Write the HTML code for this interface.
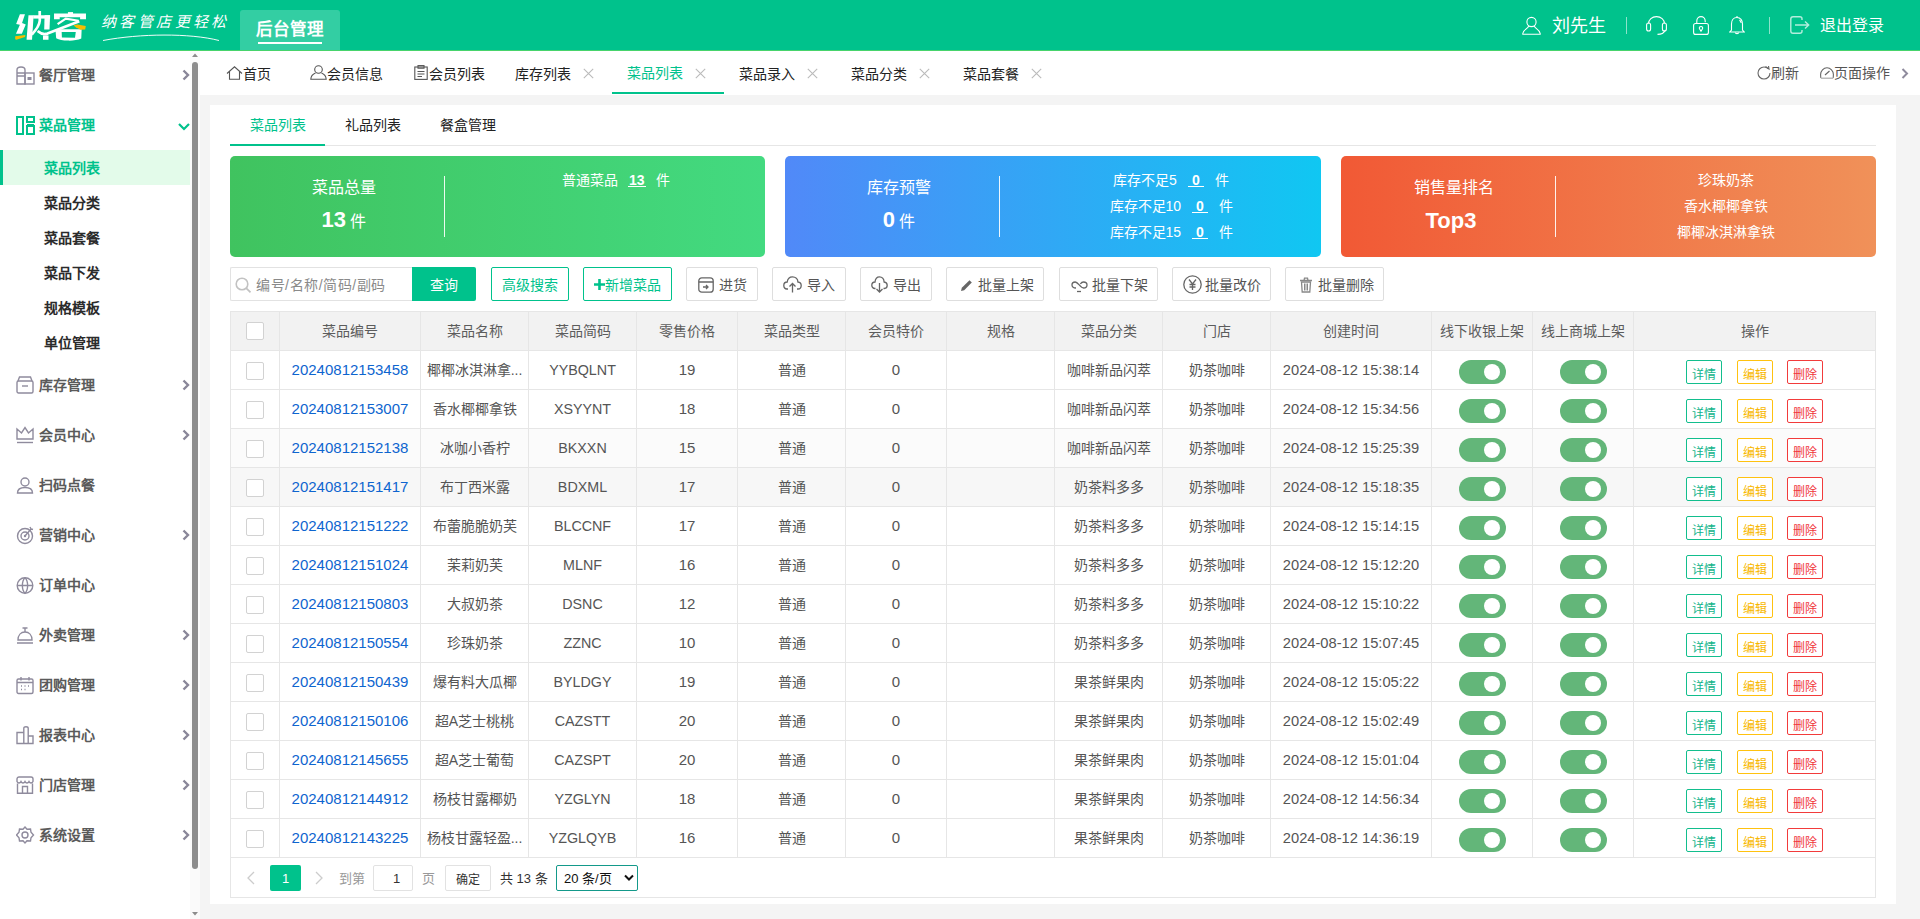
<!DOCTYPE html>
<html lang="zh-CN"><head><meta charset="utf-8"><title>纳客后台管理</title>
<style>
html,body{margin:0;padding:0;}
body{width:1920px;height:919px;overflow:hidden;position:relative;background:#f4f4f4;font-family:"Liberation Sans",sans-serif;}
.t{position:absolute;white-space:nowrap;}
</style></head><body>
<div class="t" style="left:0px;top:0px;width:1920px;height:50px;background:#00c28c;"></div><div class="t" style="left:0px;top:50px;width:1920px;height:1px;background:#48d46c;"></div><svg class="t" style="left:0px;top:0px;" width="100" height="50" viewBox="0 0 100 50" fill="none">
<g fill="#fff">
<path d="M19.88 14.27 L24.98 14.27 L22.04 23.1 L25.76 24.47 L21.84 33.69 L15.96 33.69 L19.88 24.86 L16.16 23.88 Z"/>
<path d="M28.5 15.25 L33.6 15.25 L32.04 39.76 L26.55 39.76 Z"/>
<path d="M33.2 15.25 L50.08 15.25 L50.08 18.6 L33.2 18.6 Z"/>
<path d="M44.6 15.25 L50.08 15.25 L49.5 29.6 L44.2 29.6 Z"/>
<rect x="43" y="35.45" width="5.5" height="4.3"/>
<path d="M67.94 12.1 L73.04 12.1 L73.04 14.5 L67.94 14.5 Z"/>
<path d="M54.03 13.49 L85.97 13.49 L85.97 19.36 L80.09 19.36 L80.09 17.21 L59.71 17.21 L59.71 19.36 L54.03 19.36 Z"/>
<path d="M55.4 29.16 L81.66 29.16 L81.27 38.56 C 78 40.2, 72 40.8, 67.94 40.6 C 63 40.5, 59 39.8, 56.19 38.17 Z M61.67 31.9 L61.9 37.39 L75 37.78 L75.78 31.9 Z" fill-rule="evenodd"/>
</g>
<g stroke="#fff" fill="none" stroke-linecap="butt">
<path d="M39.7 11 L39.8 20.5 C 39.5 25, 37 29, 31.8 34.5" stroke-width="2.7"/>
<path d="M37.6 31 C 40.5 33.6, 44 34.7, 47.5 33.6 L 79.3 21.2" stroke-width="2.7"/>
<path d="M57.6 24.2 L 65.8 18.6 L 78.6 20.8" stroke-width="2.1"/>
</g>
<g fill="#f7bd00">
<path d="M15.18 36.24 L25.37 35.06 L24.98 37.02 L16.35 39.76 L15.18 39.37 Z"/>
<path d="M73.43 25.24 L77.35 24.46 L85.77 26.03 L85.18 29.55 L80.48 29.75 L75.78 27.2 Z"/>
</g>
</svg><div class="t" style="left:101.0px;top:10.5px;font-size:15px;line-height:21px;color:#fff;font-weight:normal;letter-spacing:3.4px;font-style:italic;font-weight:300;">纳客管店更轻松</div><svg class="t" style="left:100px;top:33px;" width="130" height="10" viewBox="0 0 130 10" fill="none"><path d="M3 7.5 C 40 0.5, 90 0, 119 7.5" stroke="#fff" stroke-width="1" opacity="0.95"/></svg><div class="t" style="left:240px;top:10px;width:100px;height:40px;background:#33cea3;border-radius:3px 3px 0 0;"></div><div class="t" style="left:240.0px;top:17.8px;width:100px;text-align:center;font-size:16.5px;line-height:22.5px;color:#fff;font-weight:bold;">后台管理</div><div class="t" style="left:258px;top:42px;width:64px;height:2px;background:#fff;"></div><svg class="t" style="left:1522px;top:16px;" width="19" height="19" viewBox="0 0 19 19" fill="none"><circle cx="9.5" cy="6" r="4.6" stroke="#fff" stroke-width="1.1" fill="none"/><path d="M6.6 10 C 6.6 12.5, 1 13.5, 0.8 17.5 L 0.8 18.3 L 18.2 18.3 L 18.2 17.5 C 18 13.5, 12.4 12.5, 12.4 10" stroke="#fff" stroke-width="1.1" fill="none"/></svg><div class="t" style="left:1552.0px;top:13.5px;font-size:18px;line-height:24px;color:#fff;font-weight:normal;">刘先生</div><div class="t" style="left:1626px;top:17px;width:1px;height:17px;background:rgba(255,255,255,.55);"></div><svg class="t" style="left:1646px;top:16px;" width="21" height="19" viewBox="0 0 21 19" fill="none"><path d="M2.6 7.5 C 2.6 3.5, 6 0.6, 10.5 0.6 C 15 0.6, 18.4 3.5, 18.4 7.5" stroke="#fff" stroke-width="1.1" fill="none"/><rect x="0.6" y="7" width="4" height="8" rx="2" stroke="#fff" stroke-width="1.1" fill="none"/><rect x="16.4" y="7" width="4" height="8" rx="2" stroke="#fff" stroke-width="1.1" fill="none"/><path d="M19 14.5 C 18 17, 15 18.4, 11.5 18.4" stroke="#fff" stroke-width="1.1" fill="none"/></svg><svg class="t" style="left:1693px;top:16px;" width="16" height="19" viewBox="0 0 16 19" fill="none"><path d="M3.8 7.5 L3.8 5 C 3.8 2.6, 5.6 0.6, 8 0.6 C 10.4 0.6, 12.2 2.6, 12.2 5 L 12.2 6.2" stroke="#fff" stroke-width="1.1" fill="none"/><rect x="0.6" y="7.5" width="14.8" height="10.9" rx="2" stroke="#fff" stroke-width="1.1" fill="none"/><path d="M8 15.2 L6.5 12.8 C 6 12, 6.5 10.5, 8 10.5 C 9.5 10.5, 10 12, 9.5 12.8 Z" stroke="#fff" stroke-width="1.1" fill="none"/></svg><svg class="t" style="left:1729px;top:15px;" width="16" height="20" viewBox="0 0 16 20" fill="none"><path d="M8 1 L8 2.5" stroke="#fff" stroke-width="1.1" fill="none"/><path d="M8 2.5 C 4.5 2.5, 2.5 5.5, 2.5 9 L 2.5 15 L 0.8 17 L 15.2 17 L 13.5 15 L 13.5 9 C 13.5 5.5, 11.5 2.5, 8 2.5 Z" stroke="#fff" stroke-width="1.1" fill="none"/><path d="M6.2 17.5 C 6.5 19, 9.5 19, 9.8 17.5" stroke="#fff" stroke-width="1.1" fill="none"/><path d="M10.5 5 C 11.5 5.8, 12 7, 12.2 8" stroke="#fff" stroke-width="1.1" fill="none"/></svg><div class="t" style="left:1769px;top:17px;width:1px;height:17px;background:rgba(255,255,255,.55);"></div><svg class="t" style="left:1790px;top:16px;" width="20" height="18" viewBox="0 0 20 18" fill="none"><path d="M12 4 L12 2.8 C 12 1.6, 11 0.8, 9.8 0.8 L 3 0.8 C 1.8 0.8, 0.8 1.8, 0.8 3 L 0.8 15 C 0.8 16.2, 1.8 17.2, 3 17.2 L 9.8 17.2 C 11 17.2, 12 16.4, 12 15.2 L 12 14" stroke="rgba(255,255,255,.7)" stroke-width="1.4" fill="none"/><path d="M5 9 L18.5 9 M15 5.5 L18.7 9 L15 12.5" stroke="rgba(255,255,255,.7)" stroke-width="1.4" fill="none"/></svg><div class="t" style="left:1820.0px;top:15.0px;font-size:16px;line-height:22px;color:#fff;font-weight:normal;">退出登录</div><div class="t" style="left:0px;top:51px;width:190px;height:868px;background:#fff;"></div><div class="t" style="left:190px;top:51px;width:10px;height:868px;background:#fafafa;"></div><div class="t" style="left:192px;top:62px;width:6px;height:807px;background:#8c8c8c;border-radius:3px;"></div><svg class="t" style="left:192px;top:53px;" width="6" height="4" viewBox="0 0 6 4" fill="none"><path d="M0 4 L3 0.5 L6 4 Z" fill="#8c8c8c"/></svg><svg class="t" style="left:192px;top:912px;" width="6" height="4" viewBox="0 0 6 4" fill="none"><path d="M0 0 L3 3.5 L6 0 Z" fill="#8c8c8c"/></svg><svg class="t" style="left:16px;top:66px;" width="19" height="19" viewBox="0 0 19 19" fill="none"><path d="M1 18 L1 4 C 1 2, 2.5 1, 5 1 C 7.5 1, 9 2, 9 4 L 9 18 Z" stroke="#8f8b9d" stroke-width="1.4" fill="none"/><path d="M1 7 L9 7 M1 10 L9 10" stroke="#8f8b9d" stroke-width="1.4" fill="none"/><rect x="9" y="7" width="9" height="11" stroke="#8f8b9d" stroke-width="1.4" fill="none"/><rect x="11.5" y="11" width="4" height="3" fill="#8f8b9d"/></svg><div class="t" style="left:39.0px;top:64.5px;font-size:14px;line-height:20px;color:#5a5a5a;font-weight:bold;">餐厅管理</div><svg class="t" style="left:182px;top:69px;" width="8" height="12" viewBox="0 0 8 12" fill="none"><path d="M1.5 1.5 L6 6 L1.5 10.5" stroke="#8a8799" stroke-width="2.4" fill="none"/></svg><svg class="t" style="left:16px;top:116px;" width="19" height="19" viewBox="0 0 19 19" fill="none"><rect x="1" y="1" width="6" height="17" stroke="#00c28c" stroke-width="2" fill="none"/><rect x="11" y="1" width="7" height="5" stroke="#00c28c" stroke-width="2" fill="none"/><rect x="11" y="10" width="7" height="8" stroke="#00c28c" stroke-width="2" fill="none"/><rect x="11" y="8" width="7" height="2" fill="#00c28c"/></svg><div class="t" style="left:39.0px;top:114.5px;font-size:14px;line-height:20px;color:#00c28c;font-weight:bold;">菜品管理</div><svg class="t" style="left:178px;top:123px;" width="12" height="8" viewBox="0 0 12 8" fill="none"><path d="M1 1 L6 6 L11 1" stroke="#00c28c" stroke-width="2.2" fill="none"/></svg><svg class="t" style="left:16px;top:376px;" width="19" height="19" viewBox="0 0 19 19" fill="none"><path d="M2 5 L3.5 1 L14.5 1 L16 5" stroke="#8f8b9d" stroke-width="1.4" fill="none"/><rect x="1" y="5" width="16" height="12" rx="1.5" stroke="#8f8b9d" stroke-width="1.4" fill="none"/><path d="M6 10 L12 10" stroke="#8f8b9d" stroke-width="1.4" fill="none"/></svg><div class="t" style="left:39.0px;top:374.5px;font-size:14px;line-height:20px;color:#5a5a5a;font-weight:bold;">库存管理</div><svg class="t" style="left:182px;top:379px;" width="8" height="12" viewBox="0 0 8 12" fill="none"><path d="M1.5 1.5 L6 6 L1.5 10.5" stroke="#8a8799" stroke-width="2.4" fill="none"/></svg><svg class="t" style="left:16px;top:426px;" width="19" height="19" viewBox="0 0 19 19" fill="none"><path d="M1 13 L1 3 L5.5 7 L9 1.5 L12.5 7 L17 3 L17 13 Z" stroke="#8f8b9d" stroke-width="1.4" fill="none"/><path d="M1 16.5 L17 16.5" stroke="#8f8b9d" stroke-width="1.4" fill="none"/></svg><div class="t" style="left:39.0px;top:424.5px;font-size:14px;line-height:20px;color:#5a5a5a;font-weight:bold;">会员中心</div><svg class="t" style="left:182px;top:429px;" width="8" height="12" viewBox="0 0 8 12" fill="none"><path d="M1.5 1.5 L6 6 L1.5 10.5" stroke="#8a8799" stroke-width="2.4" fill="none"/></svg><svg class="t" style="left:16px;top:476px;" width="19" height="19" viewBox="0 0 19 19" fill="none"><circle cx="9" cy="6" r="4" stroke="#8f8b9d" stroke-width="1.4" fill="none"/><path d="M1.5 17 C 1.5 13, 5 11.5, 9 11.5 C 13 11.5, 16.5 13, 16.5 17 Z" stroke="#8f8b9d" stroke-width="1.4" fill="none"/></svg><div class="t" style="left:39.0px;top:474.5px;font-size:14px;line-height:20px;color:#5a5a5a;font-weight:bold;">扫码点餐</div><svg class="t" style="left:16px;top:526px;" width="19" height="19" viewBox="0 0 19 19" fill="none"><circle cx="9" cy="10" r="7.5" stroke="#8f8b9d" stroke-width="1.4" fill="none"/><circle cx="9" cy="10" r="4" stroke="#8f8b9d" stroke-width="1.4" fill="none"/><circle cx="9" cy="10" r="1.2" fill="#8f8b9d"/><path d="M9 10 L15 3 M14 1 L15 3 L17 3.5" stroke="#8f8b9d" stroke-width="1.4" fill="none"/></svg><div class="t" style="left:39.0px;top:524.5px;font-size:14px;line-height:20px;color:#5a5a5a;font-weight:bold;">营销中心</div><svg class="t" style="left:182px;top:529px;" width="8" height="12" viewBox="0 0 8 12" fill="none"><path d="M1.5 1.5 L6 6 L1.5 10.5" stroke="#8a8799" stroke-width="2.4" fill="none"/></svg><svg class="t" style="left:16px;top:576px;" width="19" height="19" viewBox="0 0 19 19" fill="none"><circle cx="9" cy="9.5" r="7.8" stroke="#8f8b9d" stroke-width="1.4" fill="none"/><path d="M1.2 9.5 L16.8 9.5 M9 1.7 C 5.5 5, 5.5 14, 9 17.3 C 12.5 14, 12.5 5, 9 1.7" stroke="#8f8b9d" stroke-width="1.4" fill="none"/></svg><div class="t" style="left:39.0px;top:574.5px;font-size:14px;line-height:20px;color:#5a5a5a;font-weight:bold;">订单中心</div><svg class="t" style="left:16px;top:626px;" width="19" height="19" viewBox="0 0 19 19" fill="none"><path d="M2 14 C 2 9, 5 6, 9 6 C 13 6, 16 9, 16 14 Z" stroke="#8f8b9d" stroke-width="1.4" fill="none"/><path d="M1 17 L17 17 M6.5 2 L11.5 2 M9 2 L9 6" stroke="#8f8b9d" stroke-width="1.4" fill="none"/></svg><div class="t" style="left:39.0px;top:624.5px;font-size:14px;line-height:20px;color:#5a5a5a;font-weight:bold;">外卖管理</div><svg class="t" style="left:182px;top:629px;" width="8" height="12" viewBox="0 0 8 12" fill="none"><path d="M1.5 1.5 L6 6 L1.5 10.5" stroke="#8a8799" stroke-width="2.4" fill="none"/></svg><svg class="t" style="left:16px;top:676px;" width="19" height="19" viewBox="0 0 19 19" fill="none"><rect x="1" y="3" width="16" height="14.5" rx="1.5" stroke="#8f8b9d" stroke-width="1.4" fill="none"/><path d="M5 1 L5 4.5 M13 1 L13 4.5 M1 6.5 L17 6.5" stroke="#8f8b9d" stroke-width="1.4" fill="none"/><path d="M5 10 L6 10 M8.5 10 L9.5 10 M12 10 L13 10 M5 13.5 L6 13.5 M8.5 13.5 L9.5 13.5" stroke="#8f8b9d" stroke-width="1.4" fill="none"/></svg><div class="t" style="left:39.0px;top:674.5px;font-size:14px;line-height:20px;color:#5a5a5a;font-weight:bold;">团购管理</div><svg class="t" style="left:182px;top:679px;" width="8" height="12" viewBox="0 0 8 12" fill="none"><path d="M1.5 1.5 L6 6 L1.5 10.5" stroke="#8a8799" stroke-width="2.4" fill="none"/></svg><svg class="t" style="left:16px;top:726px;" width="19" height="19" viewBox="0 0 19 19" fill="none"><path d="M1 17.5 L1 6.5 L7.8 6.5 L7.8 17.5 Z M7.8 17.5 L7.8 2.2 C 7.8 1.2, 8.5 0.7, 10 0.7 C 11.5 0.7, 12.2 1.2, 12.2 2.2 L 12.2 17.5 Z M12.2 17.5 L12.2 10 L17 10 L17 17.5 Z" stroke="#8f8b9d" stroke-width="1.4" fill="none"/></svg><div class="t" style="left:39.0px;top:724.5px;font-size:14px;line-height:20px;color:#5a5a5a;font-weight:bold;">报表中心</div><svg class="t" style="left:182px;top:729px;" width="8" height="12" viewBox="0 0 8 12" fill="none"><path d="M1.5 1.5 L6 6 L1.5 10.5" stroke="#8a8799" stroke-width="2.4" fill="none"/></svg><svg class="t" style="left:16px;top:776px;" width="19" height="19" viewBox="0 0 19 19" fill="none"><path d="M1.5 7.5 L1.5 17.2 L16.5 17.2 L16.5 7.5" stroke="#8f8b9d" stroke-width="1.4" fill="none"/><path d="M1 5.5 L1 3 C 1 1.8, 2 1, 3 1 L 15 1 C 16 1, 17 1.8, 17 3 L 17 5.5 C 16 7.5, 14 7.5, 13 5.5 C 12 7.5, 10 7.5, 9 5.5 C 8 7.5, 6 7.5, 5 5.5 C 4 7.5, 2 7.5, 1 5.5 Z" stroke="#8f8b9d" stroke-width="1.4" fill="none"/><path d="M6.5 17.2 L6.5 10.5 L11.5 10.5 L11.5 17.2" stroke="#8f8b9d" stroke-width="1.4" fill="none"/></svg><div class="t" style="left:39.0px;top:774.5px;font-size:14px;line-height:20px;color:#5a5a5a;font-weight:bold;">门店管理</div><svg class="t" style="left:182px;top:779px;" width="8" height="12" viewBox="0 0 8 12" fill="none"><path d="M1.5 1.5 L6 6 L1.5 10.5" stroke="#8a8799" stroke-width="2.4" fill="none"/></svg><svg class="t" style="left:16px;top:826px;" width="19" height="19" viewBox="0 0 19 19" fill="none"><path d="M9 1 L11 3.2 L14.5 3 L15 6.3 L17.5 9 L15 11.7 L14.5 15 L11 14.8 L9 17 L7 14.8 L3.5 15 L3 11.7 L0.5 9 L3 6.3 L3.5 3 L7 3.2 Z" stroke="#8f8b9d" stroke-width="1.4" fill="none"/><circle cx="9" cy="9" r="3" stroke="#8f8b9d" stroke-width="1.4" fill="none"/></svg><div class="t" style="left:39.0px;top:824.5px;font-size:14px;line-height:20px;color:#5a5a5a;font-weight:bold;">系统设置</div><svg class="t" style="left:182px;top:829px;" width="8" height="12" viewBox="0 0 8 12" fill="none"><path d="M1.5 1.5 L6 6 L1.5 10.5" stroke="#8a8799" stroke-width="2.4" fill="none"/></svg><div class="t" style="left:0px;top:150px;width:190px;height:35px;background:#e3fbea;"></div><div class="t" style="left:0px;top:150px;width:3px;height:35px;background:#00c28c;"></div><div class="t" style="left:44.0px;top:158.0px;font-size:14px;line-height:20px;color:#00c28c;font-weight:bold;">菜品列表</div><div class="t" style="left:44.0px;top:193.0px;font-size:14px;line-height:20px;color:#2b2b2b;font-weight:bold;">菜品分类</div><div class="t" style="left:44.0px;top:228.0px;font-size:14px;line-height:20px;color:#2b2b2b;font-weight:bold;">菜品套餐</div><div class="t" style="left:44.0px;top:263.0px;font-size:14px;line-height:20px;color:#2b2b2b;font-weight:bold;">菜品下发</div><div class="t" style="left:44.0px;top:298.0px;font-size:14px;line-height:20px;color:#2b2b2b;font-weight:bold;">规格模板</div><div class="t" style="left:44.0px;top:333.0px;font-size:14px;line-height:20px;color:#2b2b2b;font-weight:bold;">单位管理</div><div class="t" style="left:200px;top:51px;width:1720px;height:44px;background:#fff;"></div><svg class="t" style="left:226px;top:66px;" width="17" height="14" viewBox="0 0 17 14" fill="none"><path d="M1 7.5 L8.5 0.8 L16 7.5 M3.5 5.5 L3.5 13.3 L13.5 13.3 L13.5 5.5" stroke="#555" stroke-width="1.1" fill="none"/></svg><div class="t" style="left:243.0px;top:64.0px;font-size:14px;line-height:20px;color:#222;font-weight:normal;">首页</div><svg class="t" style="left:310px;top:65px;" width="17" height="15" viewBox="0 0 17 15" fill="none"><circle cx="8.5" cy="4.5" r="3.8" stroke="#555" stroke-width="1.1" fill="none"/><path d="M5.5 8 C 3 9, 1 11, 0.8 14.2 L 16.2 14.2 C 16 11, 14 9, 11.5 8" stroke="#555" stroke-width="1.1" fill="none"/></svg><div class="t" style="left:327.0px;top:64.0px;font-size:14px;line-height:20px;color:#222;font-weight:normal;">会员信息</div><svg class="t" style="left:414px;top:65px;" width="14" height="15" viewBox="0 0 14 15" fill="none"><rect x="0.8" y="2" width="12.4" height="12.4" stroke="#555" stroke-width="1.1" fill="none"/><rect x="4" y="0.6" width="6" height="2.6" stroke="#555" stroke-width="1.1" fill="none"/><path d="M3.5 6.5 L10.5 6.5 M3.5 9 L10.5 9 M3.5 11.5 L8 11.5" stroke="#555" stroke-width="1.1" fill="none"/></svg><div class="t" style="left:429.0px;top:64.0px;font-size:14px;line-height:20px;color:#222;font-weight:normal;">会员列表</div><div class="t" style="left:515.0px;top:64.0px;font-size:14px;line-height:20px;color:#222;font-weight:normal;">库存列表</div><svg class="t" style="left:583px;top:68px;" width="11" height="11" viewBox="0 0 11 11" fill="none"><path d="M0.8 0.8 L10.2 10.2 M10.2 0.8 L0.8 10.2" stroke="#bbb" stroke-width="1.1" fill="none"/></svg><div class="t" style="left:627.0px;top:63.0px;font-size:14px;line-height:20px;color:#00c28c;font-weight:normal;">菜品列表</div><svg class="t" style="left:695px;top:68px;" width="11" height="11" viewBox="0 0 11 11" fill="none"><path d="M0.8 0.8 L10.2 10.2 M10.2 0.8 L0.8 10.2" stroke="#bbb" stroke-width="1.1" fill="none"/></svg><div class="t" style="left:739.0px;top:64.0px;font-size:14px;line-height:20px;color:#222;font-weight:normal;">菜品录入</div><svg class="t" style="left:807px;top:68px;" width="11" height="11" viewBox="0 0 11 11" fill="none"><path d="M0.8 0.8 L10.2 10.2 M10.2 0.8 L0.8 10.2" stroke="#bbb" stroke-width="1.1" fill="none"/></svg><div class="t" style="left:851.0px;top:64.0px;font-size:14px;line-height:20px;color:#222;font-weight:normal;">菜品分类</div><svg class="t" style="left:919px;top:68px;" width="11" height="11" viewBox="0 0 11 11" fill="none"><path d="M0.8 0.8 L10.2 10.2 M10.2 0.8 L0.8 10.2" stroke="#bbb" stroke-width="1.1" fill="none"/></svg><div class="t" style="left:963.0px;top:64.0px;font-size:14px;line-height:20px;color:#222;font-weight:normal;">菜品套餐</div><svg class="t" style="left:1031px;top:68px;" width="11" height="11" viewBox="0 0 11 11" fill="none"><path d="M0.8 0.8 L10.2 10.2 M10.2 0.8 L0.8 10.2" stroke="#bbb" stroke-width="1.1" fill="none"/></svg><div class="t" style="left:612px;top:92px;width:112px;height:2px;background:#00c28c;"></div><svg class="t" style="left:1757px;top:66px;" width="14" height="14" viewBox="0 0 14 14" fill="none"><path d="M11.5 3 C 10.3 1.7, 8.7 1, 7 1 C 3.7 1, 1 3.7, 1 7 C 1 10.3, 3.7 13, 7 13 C 10.3 13, 13 10.3, 13 7" stroke="#666" stroke-width="1.1" fill="none"/><path d="M8.5 0.5 L12 3 L11.5 0" stroke="#666" stroke-width="1.1" fill="none"/></svg><div class="t" style="left:1771.0px;top:62.8px;font-size:14px;line-height:20px;color:#555;font-weight:normal;">刷新</div><svg class="t" style="left:1820px;top:67px;" width="14" height="12" viewBox="0 0 14 12" fill="none"><path d="M1 11 C 0.6 10, 0.6 9, 0.6 7.5 C 0.6 3.8, 3.5 0.8, 7 0.8 C 10.5 0.8, 13.4 3.8, 13.4 7.5 C 13.4 9, 13.4 10, 13 11" stroke="#666" stroke-width="1.1" fill="none"/><path d="M5 8 L9.5 4" stroke="#666" stroke-width="1.1" fill="none"/><rect x="1" y="10.5" width="12" height="1.5" fill="#bbb"/></svg><div class="t" style="left:1834.0px;top:62.8px;font-size:14px;line-height:20px;color:#555;font-weight:normal;">页面操作</div><svg class="t" style="left:1901px;top:68px;" width="8" height="11" viewBox="0 0 8 11" fill="none"><path d="M1.5 1 L6 5.5 L1.5 10" stroke="#8f8b9d" stroke-width="2" fill="none"/></svg><div class="t" style="left:210px;top:105px;width:1686px;height:799px;background:#fff;"></div><div class="t" style="left:230px;top:145px;width:1646px;height:1px;background:#e6e6e6;"></div><div class="t" style="left:230px;top:144px;width:95px;height:2px;background:#00c28c;"></div><div class="t" style="left:249.5px;top:115.0px;font-size:14px;line-height:20px;color:#00c28c;font-weight:normal;">菜品列表</div><div class="t" style="left:344.5px;top:115.0px;font-size:14px;line-height:20px;color:#222;font-weight:normal;">礼品列表</div><div class="t" style="left:439.5px;top:115.0px;font-size:14px;line-height:20px;color:#222;font-weight:normal;">餐盒管理</div><div class="t" style="left:230px;top:156px;width:535px;height:101px;background:linear-gradient(to right,#40c35f,#43da80);border-radius:5px;"></div><div class="t" style="left:444px;top:176px;width:1px;height:61px;background:rgba(255,255,255,.9);"></div><div class="t" style="left:785px;top:156px;width:536px;height:101px;background:linear-gradient(to right,#5189f8,#10c7f2);border-radius:5px;"></div><div class="t" style="left:999px;top:176px;width:1px;height:61px;background:rgba(255,255,255,.9);"></div><div class="t" style="left:1341px;top:156px;width:535px;height:101px;background:linear-gradient(to right,#f15935,#f09159);border-radius:5px;"></div><div class="t" style="left:1555px;top:176px;width:1px;height:61px;background:rgba(255,255,255,.9);"></div><div class="t" style="left:244.0px;top:177.0px;width:200px;text-align:center;font-size:16px;line-height:22px;color:#fff;font-weight:normal;">菜品总量</div><div class="t" style="left:244.0px;top:205.0px;width:200px;text-align:center;font-size:16px;line-height:30px;color:#fff;font-weight:normal;"><b style="font-size:22px">13</b> <span>件</span></div><div class="t" style="left:562.0px;top:170.0px;font-size:14px;line-height:20px;color:#fff;font-weight:normal;">普通菜品</div><div class="t" style="left:629.0px;top:170.0px;font-size:14px;line-height:20px;color:#fff;font-weight:bold;">13</div><div class="t" style="left:628px;top:186px;width:18px;height:1px;background:#fff;"></div><div class="t" style="left:655.5px;top:170.0px;font-size:14px;line-height:20px;color:#fff;font-weight:normal;">件</div><div class="t" style="left:799.0px;top:177.0px;width:200px;text-align:center;font-size:16px;line-height:22px;color:#fff;font-weight:normal;">库存预警</div><div class="t" style="left:799.0px;top:205.0px;width:200px;text-align:center;font-size:16px;line-height:30px;color:#fff;font-weight:normal;"><b style="font-size:22px">0</b> <span>件</span></div><div class="t" style="left:1113.0px;top:170.0px;font-size:14px;line-height:20px;color:#fff;font-weight:normal;">库存不足5</div><div class="t" style="left:1192.0px;top:170.0px;font-size:14px;line-height:20px;color:#fff;font-weight:bold;">0</div><div class="t" style="left:1188px;top:186px;width:16px;height:1px;background:#fff;"></div><div class="t" style="left:1214.5px;top:170.0px;font-size:14px;line-height:20px;color:#fff;font-weight:normal;">件</div><div class="t" style="left:1109.5px;top:196.0px;font-size:14px;line-height:20px;color:#fff;font-weight:normal;">库存不足10</div><div class="t" style="left:1196.0px;top:196.0px;font-size:14px;line-height:20px;color:#fff;font-weight:bold;">0</div><div class="t" style="left:1192px;top:212px;width:16px;height:1px;background:#fff;"></div><div class="t" style="left:1218.5px;top:196.0px;font-size:14px;line-height:20px;color:#fff;font-weight:normal;">件</div><div class="t" style="left:1109.5px;top:222.0px;font-size:14px;line-height:20px;color:#fff;font-weight:normal;">库存不足15</div><div class="t" style="left:1196.0px;top:222.0px;font-size:14px;line-height:20px;color:#fff;font-weight:bold;">0</div><div class="t" style="left:1192px;top:238px;width:16px;height:1px;background:#fff;"></div><div class="t" style="left:1218.5px;top:222.0px;font-size:14px;line-height:20px;color:#fff;font-weight:normal;">件</div><div class="t" style="left:1354.0px;top:177.0px;width:200px;text-align:center;font-size:16px;line-height:22px;color:#fff;font-weight:normal;">销售量排名</div><div class="t" style="left:1351.0px;top:206.0px;width:200px;text-align:center;font-size:22px;line-height:30px;color:#fff;font-weight:bold;">Top3</div><div class="t" style="left:1596.0px;top:170.0px;width:260px;text-align:center;font-size:14px;line-height:20px;color:#fff;font-weight:normal;">珍珠奶茶</div><div class="t" style="left:1596.0px;top:196.0px;width:260px;text-align:center;font-size:14px;line-height:20px;color:#fff;font-weight:normal;">香水椰椰拿铁</div><div class="t" style="left:1596.0px;top:222.0px;width:260px;text-align:center;font-size:14px;line-height:20px;color:#fff;font-weight:normal;">椰椰冰淇淋拿铁</div><div class="t" style="left:230px;top:267px;width:182px;height:34px;box-sizing:border-box;border:1px solid #e2e2e2;border-right:none;border-radius:2px 0 0 2px;background:#fff;"></div><svg class="t" style="left:235px;top:277px;" width="17" height="16" viewBox="0 0 17 16" fill="none"><circle cx="7" cy="7" r="5.8" stroke="#c2c2c2" stroke-width="1.6"/><path d="M11.2 11.2 L15.5 15.3" stroke="#c2c2c2" stroke-width="1.8"/></svg><div class="t" style="left:256.0px;top:275.0px;font-size:14px;line-height:20px;color:#8a8a8a;font-weight:normal;letter-spacing:0.55px;">编号/名称/简码/副码</div><div class="t" style="left:412px;top:267px;width:64px;height:34px;background:#00c28c;border-radius:0 2px 2px 0;"></div><div class="t" style="left:412.0px;top:274.5px;width:64px;text-align:center;font-size:14px;line-height:20px;color:#fff;font-weight:normal;">查询</div><div class="t" style="left:491px;top:267px;width:78px;height:34px;box-sizing:border-box;border:1px solid #00c28c;border-radius:2px;background:#fff;"></div><div class="t" style="left:491.0px;top:275.3px;width:78px;text-align:center;font-size:14px;line-height:20px;color:#00c28c;font-weight:normal;">高级搜索</div><div class="t" style="left:583px;top:267px;width:89px;height:34px;box-sizing:border-box;border:1px solid #00c28c;border-radius:2px;background:#fff;"></div><div class="t" style="left:605.0px;top:275.3px;font-size:14px;line-height:20px;color:#00c28c;font-weight:normal;">新增菜品</div><svg class="t" style="left:594px;top:279px;" width="11" height="11" viewBox="0 0 11 11" fill="none"><path d="M5.5 0 L5.5 11 M0 5.5 L11 5.5" stroke="#00c28c" stroke-width="2.6"/></svg><div class="t" style="left:686px;top:267px;width:72px;height:34px;box-sizing:border-box;border:1px solid #dedede;border-radius:2px;background:#fff;"></div><div class="t" style="left:719.0px;top:275.3px;font-size:14px;line-height:20px;color:#555;font-weight:normal;">进货</div><svg class="t" style="left:698px;top:277px;" width="16" height="16" viewBox="0 0 16 16" fill="none"><rect x="0.8" y="0.8" width="14.4" height="14.4" rx="3" stroke="#666" stroke-width="1.3" fill="none"/><path d="M0.8 5 L15.2 5 M5 10 L10 10 M8 8 L10 10 L8 12" stroke="#666" stroke-width="1.3" fill="none"/></svg><div class="t" style="left:772px;top:267px;width:74px;height:34px;box-sizing:border-box;border:1px solid #dedede;border-radius:2px;background:#fff;"></div><div class="t" style="left:807.0px;top:275.3px;font-size:14px;line-height:20px;color:#555;font-weight:normal;">导入</div><svg class="t" style="left:783px;top:276px;" width="19" height="17" viewBox="0 0 19 17" fill="none"><path d="M5 13 L4 13 C 2 13, 0.8 11.5, 0.8 9.5 C 0.8 7.5, 2.3 6, 4.2 6 C 4.6 3, 6.8 0.8, 9.5 0.8 C 12.5 0.8, 14.8 3, 14.9 6 C 16.8 6.2, 18.2 7.6, 18.2 9.5 C 18.2 11.5, 16.8 13, 15 13 L 14 13" stroke="#666" stroke-width="1.3" fill="none"/><path d="M9.5 16.5 L9.5 7.5 M6.5 10.5 L9.5 7.5 L12.5 10.5" stroke="#666" stroke-width="1.3" fill="none"/></svg><div class="t" style="left:860px;top:267px;width:72px;height:34px;box-sizing:border-box;border:1px solid #dedede;border-radius:2px;background:#fff;"></div><div class="t" style="left:893.0px;top:275.3px;font-size:14px;line-height:20px;color:#555;font-weight:normal;">导出</div><svg class="t" style="left:871px;top:276px;" width="17" height="17" viewBox="0 0 17 17" fill="none"><path d="M4.5 12.5 L3.8 12.5 C 2 12.5, 0.8 11, 0.8 9.3 C 0.8 7.5, 2.2 6, 4 6 C 4.3 3, 6.2 0.8, 8.5 0.8 C 11 0.8, 13 3, 13.1 6 C 14.8 6.2, 16.2 7.5, 16.2 9.3 C 16.2 11, 15 12.5, 13.3 12.5 L 12.5 12.5" stroke="#666" stroke-width="1.3" fill="none"/><path d="M8.5 7 L8.5 16 M5.5 13 L8.5 16 L11.5 13" stroke="#666" stroke-width="1.3" fill="none"/></svg><div class="t" style="left:946px;top:267px;width:98px;height:34px;box-sizing:border-box;border:1px solid #dedede;border-radius:2px;background:#fff;"></div><div class="t" style="left:978.0px;top:275.3px;font-size:14px;line-height:20px;color:#555;font-weight:normal;">批量上架</div><svg class="t" style="left:960px;top:279px;" width="13" height="13" viewBox="0 0 13 13" fill="none"><path d="M1 12 L1.8 8.8 L9.5 1.2 L11.8 3.5 L4.2 11.2 Z" fill="#666"/></svg><div class="t" style="left:1059px;top:267px;width:99px;height:34px;box-sizing:border-box;border:1px solid #dedede;border-radius:2px;background:#fff;"></div><div class="t" style="left:1091.5px;top:275.3px;font-size:14px;line-height:20px;color:#555;font-weight:normal;">批量下架</div><svg class="t" style="left:1071px;top:279px;" width="17" height="14" viewBox="0 0 17 14" fill="none"><path d="M5 9 C 2.5 9, 1 7.8, 1 6 C 1 4.2, 2.5 3, 4.2 3 C 7 3, 9.5 9, 12.5 9 C 14.5 9, 16 7.8, 16 6 C 16 4.2, 14.5 3, 12.5 3 C 11 3, 10 4, 9.3 5" stroke="#666" stroke-width="1.3" fill="none"/><path d="M6 12.5 L10 12.5" stroke="#666" stroke-width="1.3" fill="none"/></svg><div class="t" style="left:1172px;top:267px;width:99px;height:34px;box-sizing:border-box;border:1px solid #dedede;border-radius:2px;background:#fff;"></div><div class="t" style="left:1204.5px;top:275.3px;font-size:14px;line-height:20px;color:#555;font-weight:normal;">批量改价</div><svg class="t" style="left:1183px;top:275px;" width="19" height="19" viewBox="0 0 19 19" fill="none"><circle cx="9.5" cy="9.5" r="8.7" stroke="#666" stroke-width="1.3" fill="none"/><path d="M6 4.5 L9.5 9 L13 4.5 M9.5 9 L9.5 15 M6.5 9.5 L12.5 9.5 M6.5 12 L12.5 12" stroke="#666" stroke-width="1.3" fill="none"/></svg><div class="t" style="left:1285px;top:267px;width:99px;height:34px;box-sizing:border-box;border:1px solid #dedede;border-radius:2px;background:#fff;"></div><div class="t" style="left:1317.5px;top:275.3px;font-size:14px;line-height:20px;color:#555;font-weight:normal;">批量删除</div><svg class="t" style="left:1299px;top:277px;" width="14" height="16" viewBox="0 0 14 16" fill="none"><path d="M1 3.5 L13 3.5 M5 3.5 L5.5 1.2 L8.5 1.2 L9 3.5" stroke="#888" stroke-width="1.3" fill="none"/><path d="M2.5 5 L3.2 15 L10.8 15 L11.5 5 Z" stroke="#888" stroke-width="1.3" fill="none"/><path d="M5.5 6.5 L5.5 13.5 M7 6.5 L7 13.5 M8.5 6.5 L8.5 13.5" stroke="#888" stroke-width="1"/></svg><div class="t" style="left:230px;top:311px;width:1646px;height:39px;background:#f2f2f2;"></div><div class="t" style="left:230px;top:428px;width:1646px;height:39px;background:#fbfbfb;"></div><div class="t" style="left:230px;top:467px;width:1646px;height:39px;background:#f7f7f7;"></div><div class="t" style="left:230px;top:311px;width:1646px;height:1px;background:#e6e6e6;"></div><div class="t" style="left:230px;top:350px;width:1646px;height:1px;background:#e6e6e6;"></div><div class="t" style="left:230px;top:389px;width:1646px;height:1px;background:#e6e6e6;"></div><div class="t" style="left:230px;top:428px;width:1646px;height:1px;background:#e6e6e6;"></div><div class="t" style="left:230px;top:467px;width:1646px;height:1px;background:#e6e6e6;"></div><div class="t" style="left:230px;top:506px;width:1646px;height:1px;background:#e6e6e6;"></div><div class="t" style="left:230px;top:545px;width:1646px;height:1px;background:#e6e6e6;"></div><div class="t" style="left:230px;top:584px;width:1646px;height:1px;background:#e6e6e6;"></div><div class="t" style="left:230px;top:623px;width:1646px;height:1px;background:#e6e6e6;"></div><div class="t" style="left:230px;top:662px;width:1646px;height:1px;background:#e6e6e6;"></div><div class="t" style="left:230px;top:701px;width:1646px;height:1px;background:#e6e6e6;"></div><div class="t" style="left:230px;top:740px;width:1646px;height:1px;background:#e6e6e6;"></div><div class="t" style="left:230px;top:779px;width:1646px;height:1px;background:#e6e6e6;"></div><div class="t" style="left:230px;top:818px;width:1646px;height:1px;background:#e6e6e6;"></div><div class="t" style="left:230px;top:857px;width:1646px;height:1px;background:#e6e6e6;"></div><div class="t" style="left:230px;top:897px;width:1646px;height:1px;background:#e6e6e6;"></div><div class="t" style="left:230px;top:311px;width:1px;height:587px;background:#e6e6e6;"></div><div class="t" style="left:279px;top:311px;width:1px;height:546px;background:#e6e6e6;"></div><div class="t" style="left:420px;top:311px;width:1px;height:546px;background:#e6e6e6;"></div><div class="t" style="left:528px;top:311px;width:1px;height:546px;background:#e6e6e6;"></div><div class="t" style="left:636px;top:311px;width:1px;height:546px;background:#e6e6e6;"></div><div class="t" style="left:737px;top:311px;width:1px;height:546px;background:#e6e6e6;"></div><div class="t" style="left:845px;top:311px;width:1px;height:546px;background:#e6e6e6;"></div><div class="t" style="left:946px;top:311px;width:1px;height:546px;background:#e6e6e6;"></div><div class="t" style="left:1054px;top:311px;width:1px;height:546px;background:#e6e6e6;"></div><div class="t" style="left:1162px;top:311px;width:1px;height:546px;background:#e6e6e6;"></div><div class="t" style="left:1270px;top:311px;width:1px;height:546px;background:#e6e6e6;"></div><div class="t" style="left:1431px;top:311px;width:1px;height:546px;background:#e6e6e6;"></div><div class="t" style="left:1532px;top:311px;width:1px;height:546px;background:#e6e6e6;"></div><div class="t" style="left:1633px;top:311px;width:1px;height:546px;background:#e6e6e6;"></div><div class="t" style="left:1875px;top:311px;width:1px;height:587px;background:#e6e6e6;"></div><div class="t" style="left:246px;top:322px;width:18px;height:18px;box-sizing:border-box;border:1px solid #d2d2d2;border-radius:2px;background:#fff;"></div><div class="t" style="left:279.5px;top:321.0px;width:141px;text-align:center;font-size:14px;line-height:20px;color:#5c5c5c;font-weight:normal;">菜品编号</div><div class="t" style="left:420.5px;top:321.0px;width:108px;text-align:center;font-size:14px;line-height:20px;color:#5c5c5c;font-weight:normal;">菜品名称</div><div class="t" style="left:528.5px;top:321.0px;width:108px;text-align:center;font-size:14px;line-height:20px;color:#5c5c5c;font-weight:normal;">菜品简码</div><div class="t" style="left:636.5px;top:321.0px;width:101px;text-align:center;font-size:14px;line-height:20px;color:#5c5c5c;font-weight:normal;">零售价格</div><div class="t" style="left:737.5px;top:321.0px;width:108px;text-align:center;font-size:14px;line-height:20px;color:#5c5c5c;font-weight:normal;">菜品类型</div><div class="t" style="left:845.5px;top:321.0px;width:101px;text-align:center;font-size:14px;line-height:20px;color:#5c5c5c;font-weight:normal;">会员特价</div><div class="t" style="left:946.5px;top:321.0px;width:108px;text-align:center;font-size:14px;line-height:20px;color:#5c5c5c;font-weight:normal;">规格</div><div class="t" style="left:1054.5px;top:321.0px;width:108px;text-align:center;font-size:14px;line-height:20px;color:#5c5c5c;font-weight:normal;">菜品分类</div><div class="t" style="left:1162.5px;top:321.0px;width:108px;text-align:center;font-size:14px;line-height:20px;color:#5c5c5c;font-weight:normal;">门店</div><div class="t" style="left:1270.5px;top:321.0px;width:161px;text-align:center;font-size:14px;line-height:20px;color:#5c5c5c;font-weight:normal;">创建时间</div><div class="t" style="left:1431.5px;top:321.0px;width:101px;text-align:center;font-size:14px;line-height:20px;color:#5c5c5c;font-weight:normal;">线下收银上架</div><div class="t" style="left:1532.5px;top:321.0px;width:101px;text-align:center;font-size:14px;line-height:20px;color:#5c5c5c;font-weight:normal;">线上商城上架</div><div class="t" style="left:1633.5px;top:321.0px;width:242px;text-align:center;font-size:14px;line-height:20px;color:#5c5c5c;font-weight:normal;">操作</div><div class="t" style="left:246px;top:362px;width:18px;height:18px;box-sizing:border-box;border:1px solid #d2d2d2;border-radius:2px;background:#fff;"></div><div class="t" style="left:279.5px;top:358.5px;width:141px;text-align:center;font-size:15px;line-height:21px;color:#0e65cf;font-weight:normal;">20240812153458</div><div class="t" style="left:420.5px;top:360.0px;width:108px;text-align:center;font-size:14px;line-height:20px;color:#555;font-weight:normal;">椰椰冰淇淋拿...</div><div class="t" style="left:528.5px;top:359.7px;width:108px;text-align:center;font-size:14.3px;line-height:20.3px;color:#555;font-weight:normal;">YYBQLNT</div><div class="t" style="left:636.5px;top:358.5px;width:101px;text-align:center;font-size:15px;line-height:21px;color:#555;font-weight:normal;">19</div><div class="t" style="left:737.5px;top:360.0px;width:108px;text-align:center;font-size:14px;line-height:20px;color:#555;font-weight:normal;">普通</div><div class="t" style="left:845.5px;top:358.5px;width:101px;text-align:center;font-size:15px;line-height:21px;color:#555;font-weight:normal;">0</div><div class="t" style="left:1054.5px;top:360.0px;width:108px;text-align:center;font-size:14px;line-height:20px;color:#555;font-weight:normal;">咖啡新品闪萃</div><div class="t" style="left:1162.5px;top:360.0px;width:108px;text-align:center;font-size:14px;line-height:20px;color:#555;font-weight:normal;">奶茶咖啡</div><div class="t" style="left:1270.5px;top:360.0px;width:161px;text-align:center;font-size:14.7px;line-height:20.7px;color:#555;font-weight:normal;">2024-08-12 15:38:14</div><div class="t" style="left:1459px;top:360px;width:47px;height:24px;background:#63b679;border-radius:12px;"></div><div class="t" style="left:1484px;top:364px;width:16px;height:16px;background:#fff;border-radius:50%;"></div><div class="t" style="left:1560px;top:360px;width:47px;height:24px;background:#63b679;border-radius:12px;"></div><div class="t" style="left:1585px;top:364px;width:16px;height:16px;background:#fff;border-radius:50%;"></div><div class="t" style="left:1686px;top:360px;width:36px;height:24px;box-sizing:border-box;border:1px solid #12be8d;border-radius:2px;background:#fff;"></div><div class="t" style="left:1686.0px;top:365.5px;width:36px;text-align:center;font-size:12px;line-height:18px;color:#12b48a;font-weight:normal;">详情</div><div class="t" style="left:1737px;top:360px;width:36px;height:24px;box-sizing:border-box;border:1px solid #ffc20f;border-radius:2px;background:#fff;"></div><div class="t" style="left:1737.0px;top:365.5px;width:36px;text-align:center;font-size:12px;line-height:18px;color:#f8b800;font-weight:normal;">编辑</div><div class="t" style="left:1787px;top:360px;width:36px;height:24px;box-sizing:border-box;border:1px solid #f23b3b;border-radius:2px;background:#fff;"></div><div class="t" style="left:1787.0px;top:365.5px;width:36px;text-align:center;font-size:12px;line-height:18px;color:#f0353b;font-weight:normal;">删除</div><div class="t" style="left:246px;top:401px;width:18px;height:18px;box-sizing:border-box;border:1px solid #d2d2d2;border-radius:2px;background:#fff;"></div><div class="t" style="left:279.5px;top:397.5px;width:141px;text-align:center;font-size:15px;line-height:21px;color:#0e65cf;font-weight:normal;">20240812153007</div><div class="t" style="left:420.5px;top:399.0px;width:108px;text-align:center;font-size:14px;line-height:20px;color:#555;font-weight:normal;">香水椰椰拿铁</div><div class="t" style="left:528.5px;top:398.7px;width:108px;text-align:center;font-size:14.3px;line-height:20.3px;color:#555;font-weight:normal;">XSYYNT</div><div class="t" style="left:636.5px;top:397.5px;width:101px;text-align:center;font-size:15px;line-height:21px;color:#555;font-weight:normal;">18</div><div class="t" style="left:737.5px;top:399.0px;width:108px;text-align:center;font-size:14px;line-height:20px;color:#555;font-weight:normal;">普通</div><div class="t" style="left:845.5px;top:397.5px;width:101px;text-align:center;font-size:15px;line-height:21px;color:#555;font-weight:normal;">0</div><div class="t" style="left:1054.5px;top:399.0px;width:108px;text-align:center;font-size:14px;line-height:20px;color:#555;font-weight:normal;">咖啡新品闪萃</div><div class="t" style="left:1162.5px;top:399.0px;width:108px;text-align:center;font-size:14px;line-height:20px;color:#555;font-weight:normal;">奶茶咖啡</div><div class="t" style="left:1270.5px;top:399.0px;width:161px;text-align:center;font-size:14.7px;line-height:20.7px;color:#555;font-weight:normal;">2024-08-12 15:34:56</div><div class="t" style="left:1459px;top:399px;width:47px;height:24px;background:#63b679;border-radius:12px;"></div><div class="t" style="left:1484px;top:403px;width:16px;height:16px;background:#fff;border-radius:50%;"></div><div class="t" style="left:1560px;top:399px;width:47px;height:24px;background:#63b679;border-radius:12px;"></div><div class="t" style="left:1585px;top:403px;width:16px;height:16px;background:#fff;border-radius:50%;"></div><div class="t" style="left:1686px;top:399px;width:36px;height:24px;box-sizing:border-box;border:1px solid #12be8d;border-radius:2px;background:#fff;"></div><div class="t" style="left:1686.0px;top:404.5px;width:36px;text-align:center;font-size:12px;line-height:18px;color:#12b48a;font-weight:normal;">详情</div><div class="t" style="left:1737px;top:399px;width:36px;height:24px;box-sizing:border-box;border:1px solid #ffc20f;border-radius:2px;background:#fff;"></div><div class="t" style="left:1737.0px;top:404.5px;width:36px;text-align:center;font-size:12px;line-height:18px;color:#f8b800;font-weight:normal;">编辑</div><div class="t" style="left:1787px;top:399px;width:36px;height:24px;box-sizing:border-box;border:1px solid #f23b3b;border-radius:2px;background:#fff;"></div><div class="t" style="left:1787.0px;top:404.5px;width:36px;text-align:center;font-size:12px;line-height:18px;color:#f0353b;font-weight:normal;">删除</div><div class="t" style="left:246px;top:440px;width:18px;height:18px;box-sizing:border-box;border:1px solid #d2d2d2;border-radius:2px;background:#fff;"></div><div class="t" style="left:279.5px;top:436.5px;width:141px;text-align:center;font-size:15px;line-height:21px;color:#0e65cf;font-weight:normal;">20240812152138</div><div class="t" style="left:420.5px;top:438.0px;width:108px;text-align:center;font-size:14px;line-height:20px;color:#555;font-weight:normal;">冰咖小香柠</div><div class="t" style="left:528.5px;top:437.7px;width:108px;text-align:center;font-size:14.3px;line-height:20.3px;color:#555;font-weight:normal;">BKXXN</div><div class="t" style="left:636.5px;top:436.5px;width:101px;text-align:center;font-size:15px;line-height:21px;color:#555;font-weight:normal;">15</div><div class="t" style="left:737.5px;top:438.0px;width:108px;text-align:center;font-size:14px;line-height:20px;color:#555;font-weight:normal;">普通</div><div class="t" style="left:845.5px;top:436.5px;width:101px;text-align:center;font-size:15px;line-height:21px;color:#555;font-weight:normal;">0</div><div class="t" style="left:1054.5px;top:438.0px;width:108px;text-align:center;font-size:14px;line-height:20px;color:#555;font-weight:normal;">咖啡新品闪萃</div><div class="t" style="left:1162.5px;top:438.0px;width:108px;text-align:center;font-size:14px;line-height:20px;color:#555;font-weight:normal;">奶茶咖啡</div><div class="t" style="left:1270.5px;top:438.0px;width:161px;text-align:center;font-size:14.7px;line-height:20.7px;color:#555;font-weight:normal;">2024-08-12 15:25:39</div><div class="t" style="left:1459px;top:438px;width:47px;height:24px;background:#63b679;border-radius:12px;"></div><div class="t" style="left:1484px;top:442px;width:16px;height:16px;background:#fff;border-radius:50%;"></div><div class="t" style="left:1560px;top:438px;width:47px;height:24px;background:#63b679;border-radius:12px;"></div><div class="t" style="left:1585px;top:442px;width:16px;height:16px;background:#fff;border-radius:50%;"></div><div class="t" style="left:1686px;top:438px;width:36px;height:24px;box-sizing:border-box;border:1px solid #12be8d;border-radius:2px;background:#fff;"></div><div class="t" style="left:1686.0px;top:443.5px;width:36px;text-align:center;font-size:12px;line-height:18px;color:#12b48a;font-weight:normal;">详情</div><div class="t" style="left:1737px;top:438px;width:36px;height:24px;box-sizing:border-box;border:1px solid #ffc20f;border-radius:2px;background:#fff;"></div><div class="t" style="left:1737.0px;top:443.5px;width:36px;text-align:center;font-size:12px;line-height:18px;color:#f8b800;font-weight:normal;">编辑</div><div class="t" style="left:1787px;top:438px;width:36px;height:24px;box-sizing:border-box;border:1px solid #f23b3b;border-radius:2px;background:#fff;"></div><div class="t" style="left:1787.0px;top:443.5px;width:36px;text-align:center;font-size:12px;line-height:18px;color:#f0353b;font-weight:normal;">删除</div><div class="t" style="left:246px;top:479px;width:18px;height:18px;box-sizing:border-box;border:1px solid #d2d2d2;border-radius:2px;background:#fff;"></div><div class="t" style="left:279.5px;top:475.5px;width:141px;text-align:center;font-size:15px;line-height:21px;color:#0e65cf;font-weight:normal;">20240812151417</div><div class="t" style="left:420.5px;top:477.0px;width:108px;text-align:center;font-size:14px;line-height:20px;color:#555;font-weight:normal;">布丁西米露</div><div class="t" style="left:528.5px;top:476.7px;width:108px;text-align:center;font-size:14.3px;line-height:20.3px;color:#555;font-weight:normal;">BDXML</div><div class="t" style="left:636.5px;top:475.5px;width:101px;text-align:center;font-size:15px;line-height:21px;color:#555;font-weight:normal;">17</div><div class="t" style="left:737.5px;top:477.0px;width:108px;text-align:center;font-size:14px;line-height:20px;color:#555;font-weight:normal;">普通</div><div class="t" style="left:845.5px;top:475.5px;width:101px;text-align:center;font-size:15px;line-height:21px;color:#555;font-weight:normal;">0</div><div class="t" style="left:1054.5px;top:477.0px;width:108px;text-align:center;font-size:14px;line-height:20px;color:#555;font-weight:normal;">奶茶料多多</div><div class="t" style="left:1162.5px;top:477.0px;width:108px;text-align:center;font-size:14px;line-height:20px;color:#555;font-weight:normal;">奶茶咖啡</div><div class="t" style="left:1270.5px;top:477.0px;width:161px;text-align:center;font-size:14.7px;line-height:20.7px;color:#555;font-weight:normal;">2024-08-12 15:18:35</div><div class="t" style="left:1459px;top:477px;width:47px;height:24px;background:#63b679;border-radius:12px;"></div><div class="t" style="left:1484px;top:481px;width:16px;height:16px;background:#fff;border-radius:50%;"></div><div class="t" style="left:1560px;top:477px;width:47px;height:24px;background:#63b679;border-radius:12px;"></div><div class="t" style="left:1585px;top:481px;width:16px;height:16px;background:#fff;border-radius:50%;"></div><div class="t" style="left:1686px;top:477px;width:36px;height:24px;box-sizing:border-box;border:1px solid #12be8d;border-radius:2px;background:#fff;"></div><div class="t" style="left:1686.0px;top:482.5px;width:36px;text-align:center;font-size:12px;line-height:18px;color:#12b48a;font-weight:normal;">详情</div><div class="t" style="left:1737px;top:477px;width:36px;height:24px;box-sizing:border-box;border:1px solid #ffc20f;border-radius:2px;background:#fff;"></div><div class="t" style="left:1737.0px;top:482.5px;width:36px;text-align:center;font-size:12px;line-height:18px;color:#f8b800;font-weight:normal;">编辑</div><div class="t" style="left:1787px;top:477px;width:36px;height:24px;box-sizing:border-box;border:1px solid #f23b3b;border-radius:2px;background:#fff;"></div><div class="t" style="left:1787.0px;top:482.5px;width:36px;text-align:center;font-size:12px;line-height:18px;color:#f0353b;font-weight:normal;">删除</div><div class="t" style="left:246px;top:518px;width:18px;height:18px;box-sizing:border-box;border:1px solid #d2d2d2;border-radius:2px;background:#fff;"></div><div class="t" style="left:279.5px;top:514.5px;width:141px;text-align:center;font-size:15px;line-height:21px;color:#0e65cf;font-weight:normal;">20240812151222</div><div class="t" style="left:420.5px;top:516.0px;width:108px;text-align:center;font-size:14px;line-height:20px;color:#555;font-weight:normal;">布蕾脆脆奶芙</div><div class="t" style="left:528.5px;top:515.6px;width:108px;text-align:center;font-size:14.3px;line-height:20.3px;color:#555;font-weight:normal;">BLCCNF</div><div class="t" style="left:636.5px;top:514.5px;width:101px;text-align:center;font-size:15px;line-height:21px;color:#555;font-weight:normal;">17</div><div class="t" style="left:737.5px;top:516.0px;width:108px;text-align:center;font-size:14px;line-height:20px;color:#555;font-weight:normal;">普通</div><div class="t" style="left:845.5px;top:514.5px;width:101px;text-align:center;font-size:15px;line-height:21px;color:#555;font-weight:normal;">0</div><div class="t" style="left:1054.5px;top:516.0px;width:108px;text-align:center;font-size:14px;line-height:20px;color:#555;font-weight:normal;">奶茶料多多</div><div class="t" style="left:1162.5px;top:516.0px;width:108px;text-align:center;font-size:14px;line-height:20px;color:#555;font-weight:normal;">奶茶咖啡</div><div class="t" style="left:1270.5px;top:516.0px;width:161px;text-align:center;font-size:14.7px;line-height:20.7px;color:#555;font-weight:normal;">2024-08-12 15:14:15</div><div class="t" style="left:1459px;top:516px;width:47px;height:24px;background:#63b679;border-radius:12px;"></div><div class="t" style="left:1484px;top:520px;width:16px;height:16px;background:#fff;border-radius:50%;"></div><div class="t" style="left:1560px;top:516px;width:47px;height:24px;background:#63b679;border-radius:12px;"></div><div class="t" style="left:1585px;top:520px;width:16px;height:16px;background:#fff;border-radius:50%;"></div><div class="t" style="left:1686px;top:516px;width:36px;height:24px;box-sizing:border-box;border:1px solid #12be8d;border-radius:2px;background:#fff;"></div><div class="t" style="left:1686.0px;top:521.5px;width:36px;text-align:center;font-size:12px;line-height:18px;color:#12b48a;font-weight:normal;">详情</div><div class="t" style="left:1737px;top:516px;width:36px;height:24px;box-sizing:border-box;border:1px solid #ffc20f;border-radius:2px;background:#fff;"></div><div class="t" style="left:1737.0px;top:521.5px;width:36px;text-align:center;font-size:12px;line-height:18px;color:#f8b800;font-weight:normal;">编辑</div><div class="t" style="left:1787px;top:516px;width:36px;height:24px;box-sizing:border-box;border:1px solid #f23b3b;border-radius:2px;background:#fff;"></div><div class="t" style="left:1787.0px;top:521.5px;width:36px;text-align:center;font-size:12px;line-height:18px;color:#f0353b;font-weight:normal;">删除</div><div class="t" style="left:246px;top:557px;width:18px;height:18px;box-sizing:border-box;border:1px solid #d2d2d2;border-radius:2px;background:#fff;"></div><div class="t" style="left:279.5px;top:553.5px;width:141px;text-align:center;font-size:15px;line-height:21px;color:#0e65cf;font-weight:normal;">20240812151024</div><div class="t" style="left:420.5px;top:555.0px;width:108px;text-align:center;font-size:14px;line-height:20px;color:#555;font-weight:normal;">茉莉奶芙</div><div class="t" style="left:528.5px;top:554.6px;width:108px;text-align:center;font-size:14.3px;line-height:20.3px;color:#555;font-weight:normal;">MLNF</div><div class="t" style="left:636.5px;top:553.5px;width:101px;text-align:center;font-size:15px;line-height:21px;color:#555;font-weight:normal;">16</div><div class="t" style="left:737.5px;top:555.0px;width:108px;text-align:center;font-size:14px;line-height:20px;color:#555;font-weight:normal;">普通</div><div class="t" style="left:845.5px;top:553.5px;width:101px;text-align:center;font-size:15px;line-height:21px;color:#555;font-weight:normal;">0</div><div class="t" style="left:1054.5px;top:555.0px;width:108px;text-align:center;font-size:14px;line-height:20px;color:#555;font-weight:normal;">奶茶料多多</div><div class="t" style="left:1162.5px;top:555.0px;width:108px;text-align:center;font-size:14px;line-height:20px;color:#555;font-weight:normal;">奶茶咖啡</div><div class="t" style="left:1270.5px;top:555.0px;width:161px;text-align:center;font-size:14.7px;line-height:20.7px;color:#555;font-weight:normal;">2024-08-12 15:12:20</div><div class="t" style="left:1459px;top:555px;width:47px;height:24px;background:#63b679;border-radius:12px;"></div><div class="t" style="left:1484px;top:559px;width:16px;height:16px;background:#fff;border-radius:50%;"></div><div class="t" style="left:1560px;top:555px;width:47px;height:24px;background:#63b679;border-radius:12px;"></div><div class="t" style="left:1585px;top:559px;width:16px;height:16px;background:#fff;border-radius:50%;"></div><div class="t" style="left:1686px;top:555px;width:36px;height:24px;box-sizing:border-box;border:1px solid #12be8d;border-radius:2px;background:#fff;"></div><div class="t" style="left:1686.0px;top:560.5px;width:36px;text-align:center;font-size:12px;line-height:18px;color:#12b48a;font-weight:normal;">详情</div><div class="t" style="left:1737px;top:555px;width:36px;height:24px;box-sizing:border-box;border:1px solid #ffc20f;border-radius:2px;background:#fff;"></div><div class="t" style="left:1737.0px;top:560.5px;width:36px;text-align:center;font-size:12px;line-height:18px;color:#f8b800;font-weight:normal;">编辑</div><div class="t" style="left:1787px;top:555px;width:36px;height:24px;box-sizing:border-box;border:1px solid #f23b3b;border-radius:2px;background:#fff;"></div><div class="t" style="left:1787.0px;top:560.5px;width:36px;text-align:center;font-size:12px;line-height:18px;color:#f0353b;font-weight:normal;">删除</div><div class="t" style="left:246px;top:596px;width:18px;height:18px;box-sizing:border-box;border:1px solid #d2d2d2;border-radius:2px;background:#fff;"></div><div class="t" style="left:279.5px;top:592.5px;width:141px;text-align:center;font-size:15px;line-height:21px;color:#0e65cf;font-weight:normal;">20240812150803</div><div class="t" style="left:420.5px;top:594.0px;width:108px;text-align:center;font-size:14px;line-height:20px;color:#555;font-weight:normal;">大叔奶茶</div><div class="t" style="left:528.5px;top:593.6px;width:108px;text-align:center;font-size:14.3px;line-height:20.3px;color:#555;font-weight:normal;">DSNC</div><div class="t" style="left:636.5px;top:592.5px;width:101px;text-align:center;font-size:15px;line-height:21px;color:#555;font-weight:normal;">12</div><div class="t" style="left:737.5px;top:594.0px;width:108px;text-align:center;font-size:14px;line-height:20px;color:#555;font-weight:normal;">普通</div><div class="t" style="left:845.5px;top:592.5px;width:101px;text-align:center;font-size:15px;line-height:21px;color:#555;font-weight:normal;">0</div><div class="t" style="left:1054.5px;top:594.0px;width:108px;text-align:center;font-size:14px;line-height:20px;color:#555;font-weight:normal;">奶茶料多多</div><div class="t" style="left:1162.5px;top:594.0px;width:108px;text-align:center;font-size:14px;line-height:20px;color:#555;font-weight:normal;">奶茶咖啡</div><div class="t" style="left:1270.5px;top:594.0px;width:161px;text-align:center;font-size:14.7px;line-height:20.7px;color:#555;font-weight:normal;">2024-08-12 15:10:22</div><div class="t" style="left:1459px;top:594px;width:47px;height:24px;background:#63b679;border-radius:12px;"></div><div class="t" style="left:1484px;top:598px;width:16px;height:16px;background:#fff;border-radius:50%;"></div><div class="t" style="left:1560px;top:594px;width:47px;height:24px;background:#63b679;border-radius:12px;"></div><div class="t" style="left:1585px;top:598px;width:16px;height:16px;background:#fff;border-radius:50%;"></div><div class="t" style="left:1686px;top:594px;width:36px;height:24px;box-sizing:border-box;border:1px solid #12be8d;border-radius:2px;background:#fff;"></div><div class="t" style="left:1686.0px;top:599.5px;width:36px;text-align:center;font-size:12px;line-height:18px;color:#12b48a;font-weight:normal;">详情</div><div class="t" style="left:1737px;top:594px;width:36px;height:24px;box-sizing:border-box;border:1px solid #ffc20f;border-radius:2px;background:#fff;"></div><div class="t" style="left:1737.0px;top:599.5px;width:36px;text-align:center;font-size:12px;line-height:18px;color:#f8b800;font-weight:normal;">编辑</div><div class="t" style="left:1787px;top:594px;width:36px;height:24px;box-sizing:border-box;border:1px solid #f23b3b;border-radius:2px;background:#fff;"></div><div class="t" style="left:1787.0px;top:599.5px;width:36px;text-align:center;font-size:12px;line-height:18px;color:#f0353b;font-weight:normal;">删除</div><div class="t" style="left:246px;top:635px;width:18px;height:18px;box-sizing:border-box;border:1px solid #d2d2d2;border-radius:2px;background:#fff;"></div><div class="t" style="left:279.5px;top:631.5px;width:141px;text-align:center;font-size:15px;line-height:21px;color:#0e65cf;font-weight:normal;">20240812150554</div><div class="t" style="left:420.5px;top:633.0px;width:108px;text-align:center;font-size:14px;line-height:20px;color:#555;font-weight:normal;">珍珠奶茶</div><div class="t" style="left:528.5px;top:632.6px;width:108px;text-align:center;font-size:14.3px;line-height:20.3px;color:#555;font-weight:normal;">ZZNC</div><div class="t" style="left:636.5px;top:631.5px;width:101px;text-align:center;font-size:15px;line-height:21px;color:#555;font-weight:normal;">10</div><div class="t" style="left:737.5px;top:633.0px;width:108px;text-align:center;font-size:14px;line-height:20px;color:#555;font-weight:normal;">普通</div><div class="t" style="left:845.5px;top:631.5px;width:101px;text-align:center;font-size:15px;line-height:21px;color:#555;font-weight:normal;">0</div><div class="t" style="left:1054.5px;top:633.0px;width:108px;text-align:center;font-size:14px;line-height:20px;color:#555;font-weight:normal;">奶茶料多多</div><div class="t" style="left:1162.5px;top:633.0px;width:108px;text-align:center;font-size:14px;line-height:20px;color:#555;font-weight:normal;">奶茶咖啡</div><div class="t" style="left:1270.5px;top:633.0px;width:161px;text-align:center;font-size:14.7px;line-height:20.7px;color:#555;font-weight:normal;">2024-08-12 15:07:45</div><div class="t" style="left:1459px;top:633px;width:47px;height:24px;background:#63b679;border-radius:12px;"></div><div class="t" style="left:1484px;top:637px;width:16px;height:16px;background:#fff;border-radius:50%;"></div><div class="t" style="left:1560px;top:633px;width:47px;height:24px;background:#63b679;border-radius:12px;"></div><div class="t" style="left:1585px;top:637px;width:16px;height:16px;background:#fff;border-radius:50%;"></div><div class="t" style="left:1686px;top:633px;width:36px;height:24px;box-sizing:border-box;border:1px solid #12be8d;border-radius:2px;background:#fff;"></div><div class="t" style="left:1686.0px;top:638.5px;width:36px;text-align:center;font-size:12px;line-height:18px;color:#12b48a;font-weight:normal;">详情</div><div class="t" style="left:1737px;top:633px;width:36px;height:24px;box-sizing:border-box;border:1px solid #ffc20f;border-radius:2px;background:#fff;"></div><div class="t" style="left:1737.0px;top:638.5px;width:36px;text-align:center;font-size:12px;line-height:18px;color:#f8b800;font-weight:normal;">编辑</div><div class="t" style="left:1787px;top:633px;width:36px;height:24px;box-sizing:border-box;border:1px solid #f23b3b;border-radius:2px;background:#fff;"></div><div class="t" style="left:1787.0px;top:638.5px;width:36px;text-align:center;font-size:12px;line-height:18px;color:#f0353b;font-weight:normal;">删除</div><div class="t" style="left:246px;top:674px;width:18px;height:18px;box-sizing:border-box;border:1px solid #d2d2d2;border-radius:2px;background:#fff;"></div><div class="t" style="left:279.5px;top:670.5px;width:141px;text-align:center;font-size:15px;line-height:21px;color:#0e65cf;font-weight:normal;">20240812150439</div><div class="t" style="left:420.5px;top:672.0px;width:108px;text-align:center;font-size:14px;line-height:20px;color:#555;font-weight:normal;">爆有料大瓜椰</div><div class="t" style="left:528.5px;top:671.6px;width:108px;text-align:center;font-size:14.3px;line-height:20.3px;color:#555;font-weight:normal;">BYLDGY</div><div class="t" style="left:636.5px;top:670.5px;width:101px;text-align:center;font-size:15px;line-height:21px;color:#555;font-weight:normal;">19</div><div class="t" style="left:737.5px;top:672.0px;width:108px;text-align:center;font-size:14px;line-height:20px;color:#555;font-weight:normal;">普通</div><div class="t" style="left:845.5px;top:670.5px;width:101px;text-align:center;font-size:15px;line-height:21px;color:#555;font-weight:normal;">0</div><div class="t" style="left:1054.5px;top:672.0px;width:108px;text-align:center;font-size:14px;line-height:20px;color:#555;font-weight:normal;">果茶鲜果肉</div><div class="t" style="left:1162.5px;top:672.0px;width:108px;text-align:center;font-size:14px;line-height:20px;color:#555;font-weight:normal;">奶茶咖啡</div><div class="t" style="left:1270.5px;top:672.0px;width:161px;text-align:center;font-size:14.7px;line-height:20.7px;color:#555;font-weight:normal;">2024-08-12 15:05:22</div><div class="t" style="left:1459px;top:672px;width:47px;height:24px;background:#63b679;border-radius:12px;"></div><div class="t" style="left:1484px;top:676px;width:16px;height:16px;background:#fff;border-radius:50%;"></div><div class="t" style="left:1560px;top:672px;width:47px;height:24px;background:#63b679;border-radius:12px;"></div><div class="t" style="left:1585px;top:676px;width:16px;height:16px;background:#fff;border-radius:50%;"></div><div class="t" style="left:1686px;top:672px;width:36px;height:24px;box-sizing:border-box;border:1px solid #12be8d;border-radius:2px;background:#fff;"></div><div class="t" style="left:1686.0px;top:677.5px;width:36px;text-align:center;font-size:12px;line-height:18px;color:#12b48a;font-weight:normal;">详情</div><div class="t" style="left:1737px;top:672px;width:36px;height:24px;box-sizing:border-box;border:1px solid #ffc20f;border-radius:2px;background:#fff;"></div><div class="t" style="left:1737.0px;top:677.5px;width:36px;text-align:center;font-size:12px;line-height:18px;color:#f8b800;font-weight:normal;">编辑</div><div class="t" style="left:1787px;top:672px;width:36px;height:24px;box-sizing:border-box;border:1px solid #f23b3b;border-radius:2px;background:#fff;"></div><div class="t" style="left:1787.0px;top:677.5px;width:36px;text-align:center;font-size:12px;line-height:18px;color:#f0353b;font-weight:normal;">删除</div><div class="t" style="left:246px;top:713px;width:18px;height:18px;box-sizing:border-box;border:1px solid #d2d2d2;border-radius:2px;background:#fff;"></div><div class="t" style="left:279.5px;top:709.5px;width:141px;text-align:center;font-size:15px;line-height:21px;color:#0e65cf;font-weight:normal;">20240812150106</div><div class="t" style="left:420.5px;top:711.0px;width:108px;text-align:center;font-size:14px;line-height:20px;color:#555;font-weight:normal;">超A芝士桃桃</div><div class="t" style="left:528.5px;top:710.6px;width:108px;text-align:center;font-size:14.3px;line-height:20.3px;color:#555;font-weight:normal;">CAZSTT</div><div class="t" style="left:636.5px;top:709.5px;width:101px;text-align:center;font-size:15px;line-height:21px;color:#555;font-weight:normal;">20</div><div class="t" style="left:737.5px;top:711.0px;width:108px;text-align:center;font-size:14px;line-height:20px;color:#555;font-weight:normal;">普通</div><div class="t" style="left:845.5px;top:709.5px;width:101px;text-align:center;font-size:15px;line-height:21px;color:#555;font-weight:normal;">0</div><div class="t" style="left:1054.5px;top:711.0px;width:108px;text-align:center;font-size:14px;line-height:20px;color:#555;font-weight:normal;">果茶鲜果肉</div><div class="t" style="left:1162.5px;top:711.0px;width:108px;text-align:center;font-size:14px;line-height:20px;color:#555;font-weight:normal;">奶茶咖啡</div><div class="t" style="left:1270.5px;top:711.0px;width:161px;text-align:center;font-size:14.7px;line-height:20.7px;color:#555;font-weight:normal;">2024-08-12 15:02:49</div><div class="t" style="left:1459px;top:711px;width:47px;height:24px;background:#63b679;border-radius:12px;"></div><div class="t" style="left:1484px;top:715px;width:16px;height:16px;background:#fff;border-radius:50%;"></div><div class="t" style="left:1560px;top:711px;width:47px;height:24px;background:#63b679;border-radius:12px;"></div><div class="t" style="left:1585px;top:715px;width:16px;height:16px;background:#fff;border-radius:50%;"></div><div class="t" style="left:1686px;top:711px;width:36px;height:24px;box-sizing:border-box;border:1px solid #12be8d;border-radius:2px;background:#fff;"></div><div class="t" style="left:1686.0px;top:716.5px;width:36px;text-align:center;font-size:12px;line-height:18px;color:#12b48a;font-weight:normal;">详情</div><div class="t" style="left:1737px;top:711px;width:36px;height:24px;box-sizing:border-box;border:1px solid #ffc20f;border-radius:2px;background:#fff;"></div><div class="t" style="left:1737.0px;top:716.5px;width:36px;text-align:center;font-size:12px;line-height:18px;color:#f8b800;font-weight:normal;">编辑</div><div class="t" style="left:1787px;top:711px;width:36px;height:24px;box-sizing:border-box;border:1px solid #f23b3b;border-radius:2px;background:#fff;"></div><div class="t" style="left:1787.0px;top:716.5px;width:36px;text-align:center;font-size:12px;line-height:18px;color:#f0353b;font-weight:normal;">删除</div><div class="t" style="left:246px;top:752px;width:18px;height:18px;box-sizing:border-box;border:1px solid #d2d2d2;border-radius:2px;background:#fff;"></div><div class="t" style="left:279.5px;top:748.5px;width:141px;text-align:center;font-size:15px;line-height:21px;color:#0e65cf;font-weight:normal;">20240812145655</div><div class="t" style="left:420.5px;top:750.0px;width:108px;text-align:center;font-size:14px;line-height:20px;color:#555;font-weight:normal;">超A芝士葡萄</div><div class="t" style="left:528.5px;top:749.6px;width:108px;text-align:center;font-size:14.3px;line-height:20.3px;color:#555;font-weight:normal;">CAZSPT</div><div class="t" style="left:636.5px;top:748.5px;width:101px;text-align:center;font-size:15px;line-height:21px;color:#555;font-weight:normal;">20</div><div class="t" style="left:737.5px;top:750.0px;width:108px;text-align:center;font-size:14px;line-height:20px;color:#555;font-weight:normal;">普通</div><div class="t" style="left:845.5px;top:748.5px;width:101px;text-align:center;font-size:15px;line-height:21px;color:#555;font-weight:normal;">0</div><div class="t" style="left:1054.5px;top:750.0px;width:108px;text-align:center;font-size:14px;line-height:20px;color:#555;font-weight:normal;">果茶鲜果肉</div><div class="t" style="left:1162.5px;top:750.0px;width:108px;text-align:center;font-size:14px;line-height:20px;color:#555;font-weight:normal;">奶茶咖啡</div><div class="t" style="left:1270.5px;top:750.0px;width:161px;text-align:center;font-size:14.7px;line-height:20.7px;color:#555;font-weight:normal;">2024-08-12 15:01:04</div><div class="t" style="left:1459px;top:750px;width:47px;height:24px;background:#63b679;border-radius:12px;"></div><div class="t" style="left:1484px;top:754px;width:16px;height:16px;background:#fff;border-radius:50%;"></div><div class="t" style="left:1560px;top:750px;width:47px;height:24px;background:#63b679;border-radius:12px;"></div><div class="t" style="left:1585px;top:754px;width:16px;height:16px;background:#fff;border-radius:50%;"></div><div class="t" style="left:1686px;top:750px;width:36px;height:24px;box-sizing:border-box;border:1px solid #12be8d;border-radius:2px;background:#fff;"></div><div class="t" style="left:1686.0px;top:755.5px;width:36px;text-align:center;font-size:12px;line-height:18px;color:#12b48a;font-weight:normal;">详情</div><div class="t" style="left:1737px;top:750px;width:36px;height:24px;box-sizing:border-box;border:1px solid #ffc20f;border-radius:2px;background:#fff;"></div><div class="t" style="left:1737.0px;top:755.5px;width:36px;text-align:center;font-size:12px;line-height:18px;color:#f8b800;font-weight:normal;">编辑</div><div class="t" style="left:1787px;top:750px;width:36px;height:24px;box-sizing:border-box;border:1px solid #f23b3b;border-radius:2px;background:#fff;"></div><div class="t" style="left:1787.0px;top:755.5px;width:36px;text-align:center;font-size:12px;line-height:18px;color:#f0353b;font-weight:normal;">删除</div><div class="t" style="left:246px;top:791px;width:18px;height:18px;box-sizing:border-box;border:1px solid #d2d2d2;border-radius:2px;background:#fff;"></div><div class="t" style="left:279.5px;top:787.5px;width:141px;text-align:center;font-size:15px;line-height:21px;color:#0e65cf;font-weight:normal;">20240812144912</div><div class="t" style="left:420.5px;top:789.0px;width:108px;text-align:center;font-size:14px;line-height:20px;color:#555;font-weight:normal;">杨枝甘露椰奶</div><div class="t" style="left:528.5px;top:788.6px;width:108px;text-align:center;font-size:14.3px;line-height:20.3px;color:#555;font-weight:normal;">YZGLYN</div><div class="t" style="left:636.5px;top:787.5px;width:101px;text-align:center;font-size:15px;line-height:21px;color:#555;font-weight:normal;">18</div><div class="t" style="left:737.5px;top:789.0px;width:108px;text-align:center;font-size:14px;line-height:20px;color:#555;font-weight:normal;">普通</div><div class="t" style="left:845.5px;top:787.5px;width:101px;text-align:center;font-size:15px;line-height:21px;color:#555;font-weight:normal;">0</div><div class="t" style="left:1054.5px;top:789.0px;width:108px;text-align:center;font-size:14px;line-height:20px;color:#555;font-weight:normal;">果茶鲜果肉</div><div class="t" style="left:1162.5px;top:789.0px;width:108px;text-align:center;font-size:14px;line-height:20px;color:#555;font-weight:normal;">奶茶咖啡</div><div class="t" style="left:1270.5px;top:789.0px;width:161px;text-align:center;font-size:14.7px;line-height:20.7px;color:#555;font-weight:normal;">2024-08-12 14:56:34</div><div class="t" style="left:1459px;top:789px;width:47px;height:24px;background:#63b679;border-radius:12px;"></div><div class="t" style="left:1484px;top:793px;width:16px;height:16px;background:#fff;border-radius:50%;"></div><div class="t" style="left:1560px;top:789px;width:47px;height:24px;background:#63b679;border-radius:12px;"></div><div class="t" style="left:1585px;top:793px;width:16px;height:16px;background:#fff;border-radius:50%;"></div><div class="t" style="left:1686px;top:789px;width:36px;height:24px;box-sizing:border-box;border:1px solid #12be8d;border-radius:2px;background:#fff;"></div><div class="t" style="left:1686.0px;top:794.5px;width:36px;text-align:center;font-size:12px;line-height:18px;color:#12b48a;font-weight:normal;">详情</div><div class="t" style="left:1737px;top:789px;width:36px;height:24px;box-sizing:border-box;border:1px solid #ffc20f;border-radius:2px;background:#fff;"></div><div class="t" style="left:1737.0px;top:794.5px;width:36px;text-align:center;font-size:12px;line-height:18px;color:#f8b800;font-weight:normal;">编辑</div><div class="t" style="left:1787px;top:789px;width:36px;height:24px;box-sizing:border-box;border:1px solid #f23b3b;border-radius:2px;background:#fff;"></div><div class="t" style="left:1787.0px;top:794.5px;width:36px;text-align:center;font-size:12px;line-height:18px;color:#f0353b;font-weight:normal;">删除</div><div class="t" style="left:246px;top:830px;width:18px;height:18px;box-sizing:border-box;border:1px solid #d2d2d2;border-radius:2px;background:#fff;"></div><div class="t" style="left:279.5px;top:826.5px;width:141px;text-align:center;font-size:15px;line-height:21px;color:#0e65cf;font-weight:normal;">20240812143225</div><div class="t" style="left:420.5px;top:828.0px;width:108px;text-align:center;font-size:14px;line-height:20px;color:#555;font-weight:normal;">杨枝甘露轻盈...</div><div class="t" style="left:528.5px;top:827.6px;width:108px;text-align:center;font-size:14.3px;line-height:20.3px;color:#555;font-weight:normal;">YZGLQYB</div><div class="t" style="left:636.5px;top:826.5px;width:101px;text-align:center;font-size:15px;line-height:21px;color:#555;font-weight:normal;">16</div><div class="t" style="left:737.5px;top:828.0px;width:108px;text-align:center;font-size:14px;line-height:20px;color:#555;font-weight:normal;">普通</div><div class="t" style="left:845.5px;top:826.5px;width:101px;text-align:center;font-size:15px;line-height:21px;color:#555;font-weight:normal;">0</div><div class="t" style="left:1054.5px;top:828.0px;width:108px;text-align:center;font-size:14px;line-height:20px;color:#555;font-weight:normal;">果茶鲜果肉</div><div class="t" style="left:1162.5px;top:828.0px;width:108px;text-align:center;font-size:14px;line-height:20px;color:#555;font-weight:normal;">奶茶咖啡</div><div class="t" style="left:1270.5px;top:828.0px;width:161px;text-align:center;font-size:14.7px;line-height:20.7px;color:#555;font-weight:normal;">2024-08-12 14:36:19</div><div class="t" style="left:1459px;top:828px;width:47px;height:24px;background:#63b679;border-radius:12px;"></div><div class="t" style="left:1484px;top:832px;width:16px;height:16px;background:#fff;border-radius:50%;"></div><div class="t" style="left:1560px;top:828px;width:47px;height:24px;background:#63b679;border-radius:12px;"></div><div class="t" style="left:1585px;top:832px;width:16px;height:16px;background:#fff;border-radius:50%;"></div><div class="t" style="left:1686px;top:828px;width:36px;height:24px;box-sizing:border-box;border:1px solid #12be8d;border-radius:2px;background:#fff;"></div><div class="t" style="left:1686.0px;top:833.5px;width:36px;text-align:center;font-size:12px;line-height:18px;color:#12b48a;font-weight:normal;">详情</div><div class="t" style="left:1737px;top:828px;width:36px;height:24px;box-sizing:border-box;border:1px solid #ffc20f;border-radius:2px;background:#fff;"></div><div class="t" style="left:1737.0px;top:833.5px;width:36px;text-align:center;font-size:12px;line-height:18px;color:#f8b800;font-weight:normal;">编辑</div><div class="t" style="left:1787px;top:828px;width:36px;height:24px;box-sizing:border-box;border:1px solid #f23b3b;border-radius:2px;background:#fff;"></div><div class="t" style="left:1787.0px;top:833.5px;width:36px;text-align:center;font-size:12px;line-height:18px;color:#f0353b;font-weight:normal;">删除</div><svg class="t" style="left:246px;top:871px;" width="10" height="14" viewBox="0 0 10 14" fill="none"><path d="M8 1 L2 7 L8 13" stroke="#ccc" stroke-width="1.3" fill="none"/></svg><div class="t" style="left:270px;top:865px;width:31px;height:26px;background:#00c28c;border-radius:2px;"></div><div class="t" style="left:270.0px;top:868.5px;width:31px;text-align:center;font-size:13px;line-height:19px;color:#fff;font-weight:normal;">1</div><svg class="t" style="left:314px;top:871px;" width="10" height="14" viewBox="0 0 10 14" fill="none"><path d="M2 1 L8 7 L2 13" stroke="#ccc" stroke-width="1.3" fill="none"/></svg><div class="t" style="left:339.0px;top:868.5px;font-size:13px;line-height:19px;color:#999;font-weight:normal;">到第</div><div class="t" style="left:373px;top:865px;width:40px;height:26px;box-sizing:border-box;border:1px solid #e2e2e2;border-radius:2px;background:#fff;"></div><div class="t" style="left:376.5px;top:868.5px;width:40px;text-align:center;font-size:13px;line-height:19px;color:#333;font-weight:normal;">1</div><div class="t" style="left:422.0px;top:868.5px;font-size:13px;line-height:19px;color:#999;font-weight:normal;">页</div><div class="t" style="left:445px;top:865px;width:46px;height:26px;box-sizing:border-box;border:1px solid #e2e2e2;border-radius:2px;background:#fff;"></div><div class="t" style="left:445.0px;top:871.0px;width:46px;text-align:center;font-size:12px;line-height:18px;color:#333;font-weight:normal;">确定</div><div class="t" style="left:500.0px;top:868.5px;font-size:13px;line-height:19px;color:#333;font-weight:normal;">共 13 条</div><div class="t" style="left:556px;top:865px;width:82px;height:26px;box-sizing:border-box;border:1px solid #13998a;border-radius:2px;background:#fff;"></div><div class="t" style="left:564.0px;top:868.5px;font-size:13px;line-height:19px;color:#111;font-weight:normal;">20 条/页</div><svg class="t" style="left:624px;top:874px;" width="10" height="8" viewBox="0 0 10 8" fill="none"><path d="M1 1.5 L5 5.5 L9 1.5" stroke="#111" stroke-width="2" fill="none"/></svg>
<!--BODY-END-->
</body></html>
